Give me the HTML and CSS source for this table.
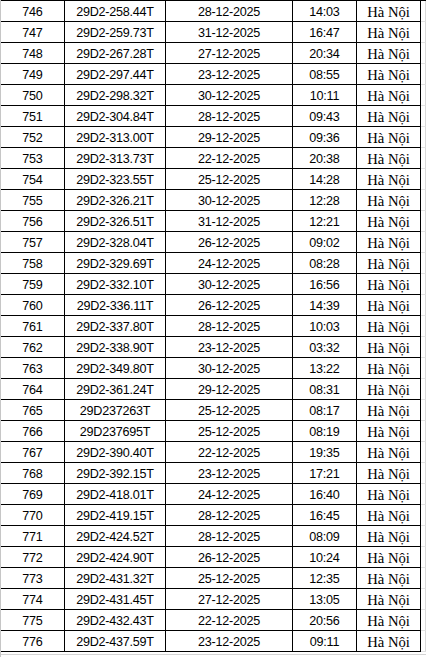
FILE: index.html
```html
<!DOCTYPE html>
<html lang="vi">
<head>
<meta charset="utf-8">
<title>Danh sách</title>
<link rel="stylesheet" href="styles.css">
</head>
<body>
<div class="sheet">
  <div class="grid" id="grid">
    <div class="c n">746</div><div class="c p">29D2-258.44T</div><div class="c d">28-12-2025</div><div class="c t">14:03</div><div class="c h">Hà Nội</div><div class="x"></div>
    <div class="c n">747</div><div class="c p">29D2-259.73T</div><div class="c d">31-12-2025</div><div class="c t">16:47</div><div class="c h">Hà Nội</div><div class="x"></div>
    <div class="c n">748</div><div class="c p">29D2-267.28T</div><div class="c d">27-12-2025</div><div class="c t">20:34</div><div class="c h">Hà Nội</div><div class="x"></div>
    <div class="c n">749</div><div class="c p">29D2-297.44T</div><div class="c d">23-12-2025</div><div class="c t">08:55</div><div class="c h">Hà Nội</div><div class="x"></div>
    <div class="c n">750</div><div class="c p">29D2-298.32T</div><div class="c d">30-12-2025</div><div class="c t">10:11</div><div class="c h">Hà Nội</div><div class="x"></div>
    <div class="c n">751</div><div class="c p">29D2-304.84T</div><div class="c d">28-12-2025</div><div class="c t">09:43</div><div class="c h">Hà Nội</div><div class="x"></div>
    <div class="c n">752</div><div class="c p">29D2-313.00T</div><div class="c d">29-12-2025</div><div class="c t">09:36</div><div class="c h">Hà Nội</div><div class="x"></div>
    <div class="c n">753</div><div class="c p">29D2-313.73T</div><div class="c d">22-12-2025</div><div class="c t">20:38</div><div class="c h">Hà Nội</div><div class="x"></div>
    <div class="c n">754</div><div class="c p">29D2-323.55T</div><div class="c d">25-12-2025</div><div class="c t">14:28</div><div class="c h">Hà Nội</div><div class="x"></div>
    <div class="c n">755</div><div class="c p">29D2-326.21T</div><div class="c d">30-12-2025</div><div class="c t">12:28</div><div class="c h">Hà Nội</div><div class="x"></div>
    <div class="c n">756</div><div class="c p">29D2-326.51T</div><div class="c d">31-12-2025</div><div class="c t">12:21</div><div class="c h">Hà Nội</div><div class="x"></div>
    <div class="c n">757</div><div class="c p">29D2-328.04T</div><div class="c d">26-12-2025</div><div class="c t">09:02</div><div class="c h">Hà Nội</div><div class="x"></div>
    <div class="c n">758</div><div class="c p">29D2-329.69T</div><div class="c d">24-12-2025</div><div class="c t">08:28</div><div class="c h">Hà Nội</div><div class="x"></div>
    <div class="c n">759</div><div class="c p">29D2-332.10T</div><div class="c d">30-12-2025</div><div class="c t">16:56</div><div class="c h">Hà Nội</div><div class="x"></div>
    <div class="c n">760</div><div class="c p">29D2-336.11T</div><div class="c d">26-12-2025</div><div class="c t">14:39</div><div class="c h">Hà Nội</div><div class="x"></div>
    <div class="c n">761</div><div class="c p">29D2-337.80T</div><div class="c d">28-12-2025</div><div class="c t">10:03</div><div class="c h">Hà Nội</div><div class="x"></div>
    <div class="c n">762</div><div class="c p">29D2-338.90T</div><div class="c d">23-12-2025</div><div class="c t">03:32</div><div class="c h">Hà Nội</div><div class="x"></div>
    <div class="c n">763</div><div class="c p">29D2-349.80T</div><div class="c d">30-12-2025</div><div class="c t">13:22</div><div class="c h">Hà Nội</div><div class="x"></div>
    <div class="c n">764</div><div class="c p">29D2-361.24T</div><div class="c d">29-12-2025</div><div class="c t">08:31</div><div class="c h">Hà Nội</div><div class="x"></div>
    <div class="c n">765</div><div class="c p">29D237263T</div><div class="c d">25-12-2025</div><div class="c t">08:17</div><div class="c h">Hà Nội</div><div class="x"></div>
    <div class="c n">766</div><div class="c p">29D237695T</div><div class="c d">25-12-2025</div><div class="c t">08:19</div><div class="c h">Hà Nội</div><div class="x"></div>
    <div class="c n">767</div><div class="c p">29D2-390.40T</div><div class="c d">22-12-2025</div><div class="c t">19:35</div><div class="c h">Hà Nội</div><div class="x"></div>
    <div class="c n">768</div><div class="c p">29D2-392.15T</div><div class="c d">23-12-2025</div><div class="c t">17:21</div><div class="c h">Hà Nội</div><div class="x"></div>
    <div class="c n">769</div><div class="c p">29D2-418.01T</div><div class="c d">24-12-2025</div><div class="c t">16:40</div><div class="c h">Hà Nội</div><div class="x"></div>
    <div class="c n">770</div><div class="c p">29D2-419.15T</div><div class="c d">28-12-2025</div><div class="c t">16:45</div><div class="c h">Hà Nội</div><div class="x"></div>
    <div class="c n">771</div><div class="c p">29D2-424.52T</div><div class="c d">28-12-2025</div><div class="c t">08:09</div><div class="c h">Hà Nội</div><div class="x"></div>
    <div class="c n">772</div><div class="c p">29D2-424.90T</div><div class="c d">26-12-2025</div><div class="c t">10:24</div><div class="c h">Hà Nội</div><div class="x"></div>
    <div class="c n">773</div><div class="c p">29D2-431.32T</div><div class="c d">25-12-2025</div><div class="c t">12:35</div><div class="c h">Hà Nội</div><div class="x"></div>
    <div class="c n">774</div><div class="c p">29D2-431.45T</div><div class="c d">27-12-2025</div><div class="c t">13:05</div><div class="c h">Hà Nội</div><div class="x"></div>
    <div class="c n">775</div><div class="c p">29D2-432.43T</div><div class="c d">22-12-2025</div><div class="c t">20:56</div><div class="c h">Hà Nội</div><div class="x"></div>
    <div class="c n">776</div><div class="c p">29D2-437.59T</div><div class="c d">23-12-2025</div><div class="c t">09:11</div><div class="c h">Hà Nội</div><div class="x"></div>
  </div>
  <div class="below"></div>
</div>
</body>
</html>
```
FILE: styles.css
```css
html, body {
  margin: 0;
  padding: 0;
  background: #ffffff;
}

.sheet {
  width: 426px;
  height: 657px;
  overflow: hidden;
  border-left: 1px solid #c6c6c6;
  box-sizing: border-box;
}

.grid {
  display: grid;
  grid-template-columns: 64px 101px 127px 64px 64px 5px;
  grid-auto-rows: 21px;
  border-top: 1px solid #000;
  width: 425px;
}

.c {
  box-sizing: border-box;
  border-right: 1px solid #000;
  border-bottom: 1px solid #000;
  text-align: center;
  white-space: nowrap;
  overflow: hidden;
  color: #000;
  font-family: "Liberation Sans", Arial, sans-serif;
  font-size: 12.6px;
  letter-spacing: -0.25px;
  padding-top: 3px;
  line-height: 17px;
}

.h {
  font-family: "Liberation Serif", "Times New Roman", serif;
  font-size: 14.67px;
  letter-spacing: 0;
}

.x {
  box-sizing: border-box;
  border-right: 1px solid #d9d9d9;
  border-bottom: 1px solid #e2e2e2;
}

.below {
  margin-top: 2px;
  height: 4px;
  border-top: 1px solid #d4d4d4;
}
```
